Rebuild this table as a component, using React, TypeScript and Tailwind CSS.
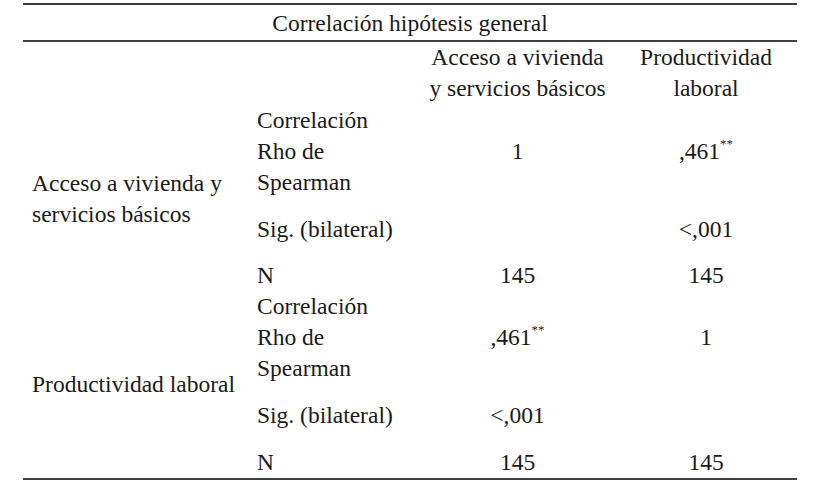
import React from "react";

const Val = ({ v, sup }: { v: string; sup?: boolean }) => (
  <div className="flex items-center justify-center">
    <span>
      {v}
      {sup && <sup className="text-[13px] relative -top-[2px] align-super leading-none">**</sup>}
    </span>
  </div>
);

const Label = ({ lines }: { lines: string[] }) => (
  <div className="flex items-center pl-[7px]">
    <div>
      {lines.map((l, i) => (
        <div key={i} className="whitespace-nowrap">{l}</div>
      ))}
    </div>
  </div>
);

export default function App() {
  return (
    <div className="w-[817px] h-[490px] bg-white text-[#1a1a1a] pt-[3px] pl-[23px] font-['Liberation_Serif']">
      <div className="w-[774px] border-t-2 border-b-2 border-[#3f3f3f] text-[23.5px] leading-[31px] font-['Liberation_Serif']">
        <div className="h-[37px] border-b-2 border-[#3f3f3f] flex items-center justify-center pt-px">
          Correlación hipótesis general
        </div>
        <div className="grid grid-cols-[227px_170px_195px_182px] grid-rows-[63px_93px_62px_31px_93px_62px_32px]">
          {/* header */}
          <div />
          <div />
          <div className="text-center">
            <div>Acceso a vivienda</div>
            <div>y servicios básicos</div>
          </div>
          <div className="text-center">
            <div>Productividad</div>
            <div>laboral</div>
          </div>

          {/* group 1 */}
          <div className="row-span-3 flex items-center pl-[9px] pt-px">
            <div>
              <div className="whitespace-nowrap">Acceso a vivienda y</div>
              <div className="whitespace-nowrap">servicios básicos</div>
            </div>
          </div>
          <Label lines={["Correlación", "Rho de", "Spearman"]} />
          <Val v="1" />
          <Val v=",461" sup />

          <Label lines={["Sig. (bilateral)"]} />
          <div />
          <Val v="<,001" />

          <Label lines={["N"]} />
          <Val v="145" />
          <Val v="145" />

          {/* group 2 */}
          <div className="row-span-3 flex items-center pl-[9px]">
            <div className="whitespace-nowrap">Productividad laboral</div>
          </div>
          <Label lines={["Correlación", "Rho de", "Spearman"]} />
          <Val v=",461" sup />
          <Val v="1" />

          <Label lines={["Sig. (bilateral)"]} />
          <Val v="<,001" />
          <div />

          <Label lines={["N"]} />
          <Val v="145" />
          <Val v="145" />
        </div>
      </div>
    </div>
  );
}
